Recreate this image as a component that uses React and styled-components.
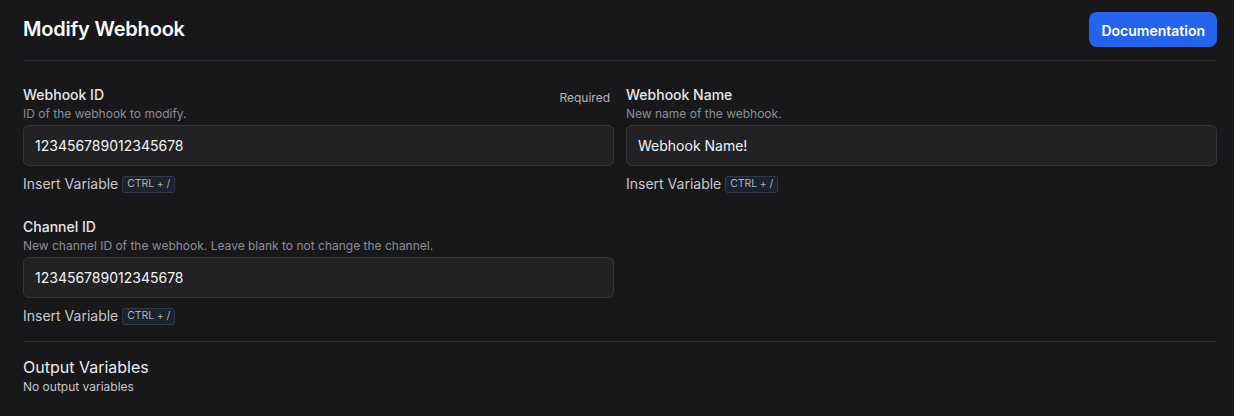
import React from "react";
import styled, { createGlobalStyle } from "styled-components";

const GlobalStyle = createGlobalStyle`
	html, body {
		margin: 0;
		background: #18181b;
	}
	body {
		font-family: Inter, "Noto Sans", sans-serif;
		color: #f4f4f5;
	}
`;

function Field({ label, description, value, required }) {
	return (
		<FieldStyles>
			<div className="head">
				<Label>{label}</Label>
				{required && <span className="required">Required</span>}
			</div>
			<Description>{description}</Description>
			<Input defaultValue={value} />
			<div className="insert">
				Insert Variable <Kbd>CTRL + /</Kbd>
			</div>
		</FieldStyles>
	);
}

export default function App() {
	return (
		<Page>
			<GlobalStyle />
			<Header>
				<h1>Modify Webhook</h1>
				<Button>Documentation</Button>
			</Header>
			<Divider />
			<Grid>
				<Field
					label="Webhook ID"
					description="ID of the webhook to modify."
					value="123456789012345678"
					required
				/>
				<Field
					label="Webhook Name"
					description="New name of the webhook."
					value="Webhook Name!"
				/>
				<Field
					label="Channel ID"
					description="New channel ID of the webhook. Leave blank to not change the channel."
					value="123456789012345678"
				/>
			</Grid>
			<Divider $top={15} />
			<Output>
				<h2>Output Variables</h2>
				<p>No output variables</p>
			</Output>
		</Page>
	);
}

const Page = styled.div`
	padding: 12px 17px 0 23px;
`;

const Header = styled.div`
	display: flex;
	justify-content: space-between;
	align-items: center;
	height: 35px;

	h1 {
		margin: 0;
		font-size: 20px;
		font-weight: 600;
		letter-spacing: -0.2px;
		color: #fafafa;
		position: relative;
		top: -1px;
	}
`;

const Button = styled.button`
	height: 35px;
	padding: 0 12px;
	background: #2563eb;
	color: #fff;
	border: none;
	border-radius: 8px;
	font-family: Inter, sans-serif;
	font-size: 14px;
	font-weight: 600;
	padding-top: 1px;
`;

const Divider = styled.hr`
	margin: ${(p) => p.$top ?? 13}px 0 0;
	border: none;
	border-top: 1px solid #2e2e33;
`;

const Grid = styled.div`
	display: grid;
	grid-template-columns: 1fr 1fr;
	column-gap: 12px;
	row-gap: 22px;
	margin-top: 23px;
`;

const FieldStyles = styled.div`
	display: flex;
	flex-direction: column;

	.head {
		display: flex;
		justify-content: space-between;
		align-items: flex-end;
		height: 20px;
	}

	.required {
		font-size: 12px;
		color: #b4b4bb;
		margin-right: 4px;
		position: relative;
		top: 1px;
	}

	.insert {
		margin-top: 8px;
		display: flex;
		align-items: center;
		gap: 4px;
		font-size: 14px;
		line-height: 20px;
		color: #c8c8cd;
	}
`;

const Label = styled.label`
	font-size: 14px;
	font-weight: 500;
	line-height: 20px;
	color: #e6e6e9;
	position: relative;
	top: 1px;
`;

const Description = styled.div`
	margin-top: 2px;
	font-size: 12px;
	line-height: 16px;
	color: #8c8c94;
`;

const Input = styled.input`
	margin-top: 3px;
	box-sizing: border-box;
	height: 41px;
	width: 100%;
	padding: 0 11px;
	background: #222225;
	border: 1px solid #35353a;
	border-radius: 6px;
	color: #f4f4f5;
	font-family: Inter, sans-serif;
	font-size: 14px;
	outline: none;
`;

const Kbd = styled.kbd`
	display: inline-flex;
	align-items: center;
	box-sizing: border-box;
	height: 17px;
	padding: 0 4px;
	background: #1c212b;
	border: 1px solid #323a48;
	border-radius: 3px;
	font-family: Inter, sans-serif;
	font-size: 10.5px;
	letter-spacing: -0.1px;
	color: #a9b1bf;
`;

const Output = styled.div`
	margin-top: 13px;

	h2 {
		margin: 0;
		font-size: 16px;
		font-weight: 400;
		line-height: 24px;
		color: #ececef;
	}

	p {
		margin: 0;
		font-size: 12px;
		line-height: 16px;
		color: #c4c4c9;
	}
`;
